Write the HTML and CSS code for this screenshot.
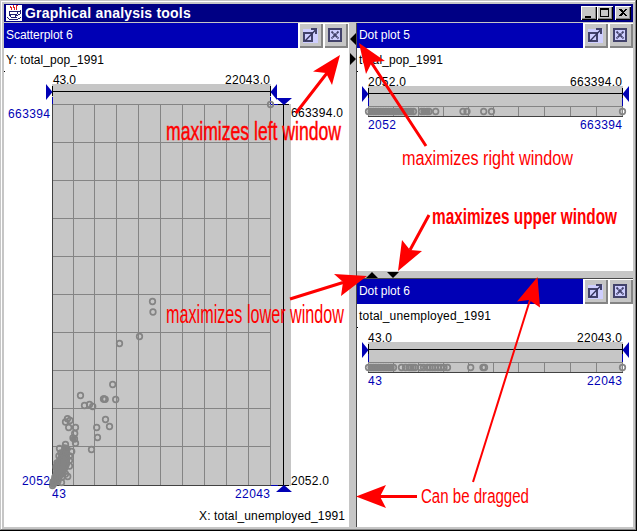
FILE: index.html
```html
<!DOCTYPE html>
<html lang="en">
<head>
<meta charset="utf-8">
<title>Graphical analysis tools</title>
<link rel="stylesheet" href="styles.css">
</head>
<body>
<svg class="defs" width="0" height="0" aria-hidden="true">
  <defs>
    <symbol id="detach" viewBox="0 0 24 25">
      <path fill="#ceceff" d="M4 6h15v14H4z"/>
      <path fill="none" stroke="#42426b" stroke-width="2" d="M5 10h8v8H5z"/>
      <path fill="none" stroke="#31315a" stroke-width="1.3" d="M6 18L17 6.500"/>
      <path fill="#42426b" d="M12 5h6v6h-2V7h-4z"/>
    </symbol>
    <symbol id="close" viewBox="0 0 24 25">
      <path fill="#ceceff" d="M4 5h14v14H4z"/>
      <path fill="none" stroke="#42426b" stroke-width="2" d="M5 6h12v12H5z"/>
      <path fill="none" stroke="#42426b" stroke-width="1.800" stroke-dasharray="2.500 .4" d="M7.500 8.500l7 7M14.500 8.500l-7 7"/>
    </symbol>
    <symbol id="dotframe" viewBox="357 48 276 223">
      <path class="face" d="M368 86h255v30H368z"/>
      <path class="grid" d="M368 106.500h255M368.500 106v10M393.500 106v10M418.500 106v10M443.500 106v10M468.500 106v10M493.500 106v10M518.500 106v10M544.500 106v10M570.500 106v10M596.500 106v10M622.500 106v10"/>
      <path class="edge" d="M368 116.500h255"/>
      <path class="axis" d="M368 93.500h254M368.500 88v10M622.500 88v10"/>
      <path class="range" d="M368.500 98v8M622.500 98v8"/>
      <path class="handle" d="M362 86v16l6.500-8zM629 86v16l-6.500-8z"/>
      <path class="axis" d="M357 71.500h1"/>
    </symbol>
  </defs>
</svg>
<main class="window">
  <header class="titlebar">
    <svg class="java" viewBox="0 0 16 16">
      <path fill="#fff" d="M0 0h16v16H0z"/>
      <path fill="none" stroke="#e02020" d="M5 1l-1 1 2 1-1 2M8 0L7 2l2 1-1 2M12 0l-2 1 1 2-1 2"/>
      <path fill="none" stroke="#202070" d="M3 6.500h8M3 6v3l2 3h4l2-3V6M11 7l3-1v3l-4 2M4 9.500h6M1 12.500l3 2h7l4-2M5 12.500h6"/>
    </svg>
    <h1>Graphical analysis tools</h1>
    <div class="controls">
      <svg viewBox="0 0 16 14"><path d="M4 10h6v2H4z"/></svg>
      <svg viewBox="0 0 16 14"><path fill-rule="evenodd" d="M3 2h9v9H3zM4 4h7v6H4z"/></svg>
      <svg class="shut" viewBox="0 0 16 14"><path d="M4 3h2l2 2 2-2h2L9 6.500l3 3.500h-2L8 8l-2 2H4l3-3.500z"/></svg>
    </div>
  </header>
  <div class="split">
    <section class="pane">
      <header class="bar"><h2>Scatterplot 6</h2><div class="tools"><svg><use href="#detach"/></svg><svg><use href="#close"/></svg></div></header>
      <svg class="plot" viewBox="4 48 345 479">
        <path class="face" d="M52 84h219v20H52zM52 104h239v382H52z"/>
        <path class="grid" d="M52 104.500h219M52 142.500h219M52 180.500h219M52 218.500h219M52 256.500h219M52 294.500h219M52 332.500h219M52 370.500h219M52 408.500h219M52 446.500h219M73.500 104v381M94.500 104v381M116.500 104v381M138.500 104v381M160.500 104v381M182.500 104v381M204.500 104v381M226.500 104v381M248.500 104v381M270.500 104v381"/>
        <path class="edge" d="M52.500 104v382M52 485.500h219"/>
        <path class="axis" d="M52 91.500h219M52.500 86v10M270.500 86v10M283.500 104v382M278 104.500h11M278 485.500h11M4 71.500h1"/>
        <path class="range" d="M52.500 97v7M270.500 97v7M271 104.500h7M271 485.500h7"/>
        <path class="handle" d="M46 84v16l6.500-8zM277 84v16l-6.500-8zM276 98h16l-8 7zM276 492h16l-8-7z"/>
        <path class="mass" d="M50 481l3-8 1-9 5-10 4-10 6 1 1 10 0 10-3 7-5 7-6 8-4 1-3-3zM72 436h4v6h-4z"/>
        <g data-plot="scatter"></g>
        <text x="6" y="64" textLength="98">Y: total_pop_1991</text>
        <text x="53" y="84" textLength="23">43.0</text>
        <text x="225" y="84" textLength="45">22043.0</text>
        <text x="291" y="117" textLength="52">663394.0</text>
        <text x="291" y="485" textLength="38">2052.0</text>
        <text x="199" y="520" textLength="146">X: total_unemployed_1991</text>
        <g class="blue">
          <text x="8" y="118" textLength="42">663394</text>
          <text x="22" y="485" textLength="28">2052</text>
          <text x="52" y="498" textLength="14">43</text>
          <text x="235" y="498" textLength="35">22043</text>
        </g>
      </svg>
    </section>
    <div class="divider vertical">
      <svg viewBox="0 0 8 44"><path d="M7 10v12L1 16zM1 30v12l6-6z"/></svg>
    </div>
    <div class="stack">
      <section class="pane">
        <header class="bar"><h2>Dot plot 5</h2><div class="tools"><svg><use href="#detach"/></svg><svg><use href="#close"/></svg></div></header>
        <svg class="plot" viewBox="357 48 276 223">
          <use href="#dotframe" x="357" y="48" width="276" height="223"/>
          <path class="mass" d="M369 108h45v7h-45zM422 108h8v7h-8z"/>
          <g data-plot="population"></g>
          <text x="359" y="64" textLength="84">total_pop_1991</text>
          <text x="368" y="86" textLength="38">2052.0</text>
          <text x="570" y="86" textLength="52">663394.0</text>
          <g class="blue"><text x="368" y="129" textLength="28">2052</text><text x="580" y="129" textLength="42">663394</text></g>
        </svg>
      </section>
      <div class="divider horizontal">
        <svg viewBox="0 0 44 8"><path d="M9 7h12l-6-6zM30 1h12l-6 6z"/></svg>
      </div>
      <section class="pane">
        <header class="bar"><h2>Dot plot 6</h2><div class="tools"><svg><use href="#detach"/></svg><svg><use href="#close"/></svg></div></header>
        <svg class="plot" viewBox="357 48 276 223">
          <use href="#dotframe" x="357" y="48" width="276" height="223"/>
          <path class="mass" d="M369 108h25v7h-25z"/>
          <g data-plot="unemployed"></g>
          <text x="359" y="64" textLength="132">total_unemployed_1991</text>
          <text x="368" y="86" textLength="24">43.0</text>
          <text x="577" y="86" textLength="45">22043.0</text>
          <g class="blue"><text x="368" y="129" textLength="14">43</text><text x="587" y="129" textLength="35">22043</text></g>
        </svg>
      </section>
    </div>
  </div>
</main>
<svg class="notes" viewBox="0 0 637 531">
  <path stroke-width="3" d="M296 113L327 73M371 62L426 146M410 250L429 215M343 282.500L290 299M380 496.500H417"/>
  <path stroke-width="2" d="M530 300L473 482"/>
  <path class="heads" d="M340 55L313 71.500l13 1.500 6 12zM359 43l7 31 6-12 13-1zM398 271l4-31 8 10 12 1zM367 276l-33-2 9 8-2 14zM537.500 277L517 301.500l12-1.500 11 7.500zM356 496.500l30-11.500-6 11.500 6 11.500z"/>
  <text class="medium" font-size="25" x="166" y="140" textLength="175" lengthAdjust="spacingAndGlyphs">maximizes left window</text>
  <text font-size="20" x="402" y="165" textLength="171" lengthAdjust="spacingAndGlyphs">maximizes right window</text>
  <text class="strong" font-size="22" x="432" y="224" textLength="185" lengthAdjust="spacingAndGlyphs">maximizes upper window</text>
  <text font-size="26" x="166" y="323" textLength="178" lengthAdjust="spacingAndGlyphs">maximizes lower window</text>
  <text font-size="20" x="421" y="503" textLength="108" lengthAdjust="spacingAndGlyphs">Can be dragged</text>
</svg>
<script src="plots.js"></script>
</body>
</html>
```
FILE: styles.css
```css
* { box-sizing: border-box; }
body { margin: 0; width: 637px; height: 531px; overflow: hidden; position: relative; font: 12px "Liberation Sans", Arial, sans-serif; background: #000; }
svg { display: block; }
.defs { position: absolute; }
h1, h2 { margin: 0; color: #fff; white-space: nowrap; }
.window { width: 636px; height: 530px; background: #c6c6c6; border: 1px solid #c6c6c6; border-right-color: #848484; border-bottom-color: #848484; box-shadow: inset 1px 1px #fff; padding: 3px 2px 2px 3px; display: flex; flex-direction: column; }
.titlebar { height: 18px; background: #000084; display: flex; align-items: center; padding: 0 2px; flex: none; }
.java { width: 16px; height: 16px; margin-right: 3px; shape-rendering: crispEdges; }
h1 { font-size: 14px; line-height: 18px; letter-spacing: .2px; }
.controls { display: flex; margin-left: auto; }
.controls svg { width: 16px; height: 14px; background: #c6c6c6; box-shadow: inset 1px 1px #fff, inset -1px -1px #000, inset -2px -2px #848484; shape-rendering: crispEdges; }
.controls .shut { margin-left: 2px; }
.split { flex: 1; display: grid; grid-template-columns: 345px 8px 276px; margin-top: 1px; min-height: 0; }
.pane { background: #fff; display: flex; flex-direction: column; min-width: 0; min-height: 0; }
.bar { height: 25px; flex: none; display: flex; background: #0000b5; }
.bar h2 { flex: 1; font-size: 12px; font-weight: 400; line-height: 25px; padding-left: 2px; letter-spacing: -.05px; }
.tools { display: flex; gap: 1px; background: #fff; width: 51px; padding-left: 1px; }
.stack .tools { width: 50px; }
.tools svg { width: 24px; height: 25px; background: #c6c6c6; box-shadow: inset 1px 1px #fff, inset -2px -2px #848484; }
.plot { width: 100%; flex: 1; min-height: 0; }
.stack { display: grid; grid-template-rows: 248px 8px 248px; min-height: 0; }
.divider { background: #c6c6c6; }
.vertical { border-right: 1px solid #4a4a4a; }
.vertical svg { width: 8px; height: 44px; }
.horizontal { border-bottom: 1px solid #4a4a4a; }
.horizontal svg { width: 44px; height: 8px; }
.face { fill: #c6c6c6; }
.grid, .edge, .axis, .range { fill: none; stroke: #848484; shape-rendering: crispEdges; }
.edge { stroke: #424242; }
.axis { stroke: #000; }
.range { stroke: #0000b5; }
.handle, .blue { fill: #0000b5; }
.mass { fill: #848484; }
.plot circle { fill: none; stroke: #848484; stroke-width: 1.7; }
.notes { position: absolute; left: 0; top: 0; width: 637px; height: 531px; pointer-events: none; fill: #f00; }
.notes path { fill: none; stroke: #f00; }
.notes .heads { fill: #f00; stroke: none; }
.medium { stroke: #f00; stroke-width: .45px; }
.strong { font-weight: 700; }
```
FILE: plots.js
```javascript
const row = xs => xs.map(x => [x, 111.5]);
const run = (from, to, step) => {
  const out = [];
  for (let x = from; x <= to; x += step) out.push(x);
  return out;
};
const plots = {
  scatter: [
    [270.5, 104.5], [152.5, 301.5], [153, 312], [139.5, 336.5], [119.5, 343.5],
    [112.7, 384.5], [80.5, 395.5], [84.5, 405.5], [89.5, 404.5], [92.7, 406.5],
    [103.5, 399], [105.2, 399.3], [104.3, 399], [115.7, 399.5], [67.5, 418.7],
    [70, 420.5], [65.5, 422], [68.7, 427.5], [75.5, 427.5], [74.7, 433.5],
    [73, 438], [74.5, 439], [75.5, 443.2], [96.7, 427.5], [105.5, 419.5],
    [109.5, 426.5], [97.5, 437.5], [91.5, 449.5], [59.5, 448.5], [65.5, 444.5],
    [71.7, 451.5], [69.5, 456], [69.5, 460.5], [69.5, 466], [67.7, 476.5],
    [65.5, 474], [61.5, 482.5], [57, 463], [56, 467], [59, 456], [61, 453],
    [67, 449], [52.5, 485.5], [53, 482], [55, 477], [58, 481], [62, 477]
  ],
  population: row([...run(368.5, 414, 2.5), 421.5, 424, 427, 429, 435.7, 463, 467, 483.7, 491.5, 622.5]),
  unemployed: row([...run(368.5, 394, 2.5), 401.5, 405.5, 409, 411, 413, 415, 420.5, 423.5, 427.5, 430, 432.5, 435, 438, 441, 444, 447.5, 470.7, 483, 484.5, 622.5])
};
const NS = "http://www.w3.org/2000/svg";
for (const [name, points] of Object.entries(plots)) {
  const group = document.querySelector(`[data-plot="${name}"]`);
  for (const [x, y] of points) {
    const dot = document.createElementNS(NS, "circle");
    dot.setAttribute("cx", x);
    dot.setAttribute("cy", y);
    dot.setAttribute("r", 2.8);
    group.appendChild(dot);
  }
}
```
